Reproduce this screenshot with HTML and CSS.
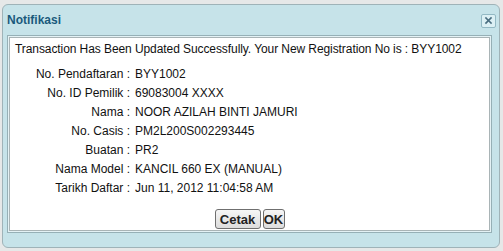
FILE: index.html
```html
<!DOCTYPE html>
<html>
<head>
<meta charset="utf-8">
<link rel="stylesheet" href="styles.css">
</head>
<body>
<div class="dialog">
  <div class="titlebar">
    <span class="title">Notifikasi</span>
    <span class="close"><svg width="9" height="9" viewBox="0 0 9 9"><path d="M2 2 L7 7 M7 2 L2 7" stroke="#4a6e80" stroke-width="1.7" stroke-linecap="square"/></svg></span>
  </div>
  <div class="frame">
    <div class="panel">
      <div class="message">Transaction Has Been Updated Successfully. Your New Registration No is : BYY1002</div>
      <div class="details">
        <div class="label">No. Pendaftaran :</div><div class="value">BYY1002</div>
        <div class="label">No. ID Pemilik :</div><div class="value">69083004 XXXX</div>
        <div class="label">Nama :</div><div class="value">NOOR AZILAH BINTI JAMURI</div>
        <div class="label">No. Casis :</div><div class="value">PM2L200S002293445</div>
        <div class="label">Buatan :</div><div class="value">PR2</div>
        <div class="label">Nama Model :</div><div class="value">KANCIL 660 EX (MANUAL)</div>
        <div class="label">Tarikh Daftar :</div><div class="value">Jun 11, 2012 11:04:58 AM</div>
      </div>
      <div class="actions">
        <button class="btn btn-print">Cetak</button>
        <button class="btn btn-ok">OK</button>
      </div>
    </div>
  </div>
</div>
</body>
</html>
```
FILE: styles.css
```css
html, body {
  margin: 0;
  padding: 0;
}
body {
  background: #e6e8e8;
  font-family: "Liberation Sans", Arial, sans-serif;
  font-size: 12px;
  color: #111;
  width: 503px;
  height: 251px;
  overflow: hidden;
}
.dialog {
  box-sizing: border-box;
  margin: 4px 0 0 2px;
  width: 498px;
  height: 244px;
  border: 1px solid #9fb3b8;
  border-radius: 6px;
  background: #c6e3e9;
  display: flex;
  flex-direction: column;
}
.titlebar {
  height: 30px;
  display: flex;
  align-items: center;
  justify-content: space-between;
  padding: 0 3px 0 4px;
}
.title {
  font-weight: bold;
  font-size: 12px;
  color: #1a5a7c;
}
.close {
  box-sizing: border-box;
  width: 15px;
  height: 14px;
  border: 1px solid #93b9c4;
  border-radius: 2px;
  background: #dcf0f4;
  display: flex;
  align-items: center;
  justify-content: center;
  margin-top: 1px;
}
.frame {
  margin: 0 7px 0 4px;
  border: 1px solid #96b0b6;
  padding: 1px;
  background: #e4f2f5;
  height: 198px;
  box-sizing: border-box;
}
.panel {
  box-sizing: border-box;
  height: 100%;
  background: #fff;
  border: 1px solid #a9b4b6;
  padding: 2px 0 0 5px;
}
.message {
  line-height: 19px;
  height: 19px;
  white-space: nowrap;
  letter-spacing: -0.08px;
}
.details {
  display: grid;
  grid-template-columns: 120px auto;
  column-gap: 5px;
  margin-top: 6px;
  margin-left: -5px;
  line-height: 19px;
}
.label {
  text-align: right;
}
.actions {
  display: flex;
  justify-content: center;
  gap: 2px;
  margin-top: 11px;
  margin-left: -5px;
}
.btn {
  font-family: "Liberation Sans", Arial, sans-serif;
  font-weight: bold;
  font-size: 13px;
  color: #222;
  height: 20px;
  padding: 0;
  border: 1px solid #6f6f6f;
  border-radius: 3px;
  background: linear-gradient(#f6f6f6, #dcdcdc);
}
.btn-print {
  width: 46px;
}
.btn-ok {
  width: 22px;
}
```
